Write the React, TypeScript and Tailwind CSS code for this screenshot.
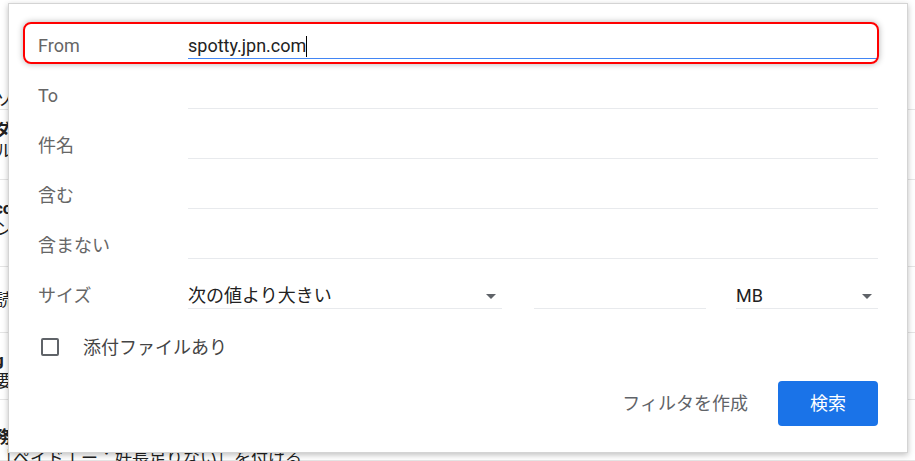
import React from "react";

const jp = { fontFamily: 'Roboto, "Noto Sans CJK JP", sans-serif' };

function Arrow() {
  return (
    <svg width="10" height="5" viewBox="0 0 10 5" className="shrink-0">
      <path d="M0 0 L10 0 L5 5 Z" fill="#5f6368" />
    </svg>
  );
}

function Row({ label, children }: { label: string; children?: React.ReactNode }) {
  return (
    <div className="flex h-[50px] items-end">
      <div className="w-[150px] h-[25px] leading-[24px] text-[18px] text-[#666] whitespace-nowrap">{label}</div>
      {children ?? <div className="flex-1 h-[25px] border-b border-[#e8eaed]" />}
    </div>
  );
}

export default function App() {
  const bgRows = [
    { cls: "h-[110px] pt-[89px]", a: "", b: "ソ" },
    { cls: "h-[70px] pt-[10px]", a: "ダ", b: "ル" },
    { cls: "h-[87px] pt-[18px]", a: "co", b: "ン" },
    { cls: "h-[66px] pt-[23px]", a: "", b: "読" },
    { cls: "h-[67px] pt-[17px]", a: "g", b: "要" },
    { cls: "h-[61px] pt-[27px]", a: "務", b: "［ペイド工ー：妊長足りない］を付ける" },
  ];
  return (
    <div className="relative w-[915px] h-[461px] overflow-hidden bg-white" style={jp}>
      {/* background mail list */}
      <div className="flex flex-col w-full">
        {bgRows.map((r, i) => (
          <div key={i} className={"flex flex-col border-b border-[#e5e5e5] text-[17px] text-[#222] leading-[21px] " + r.cls}>
            {r.a && <div className="ml-[-6px] font-bold">{r.a}</div>}
            <div className="ml-[-4px] whitespace-nowrap">{r.b}</div>
          </div>
        ))}
      </div>

      {/* dialog */}
      <div className="absolute left-[8px] top-[3px] w-[900px] h-[450px] bg-white border border-[#d4d4d4] shadow-[0_2px_6px_rgba(0,0,0,0.25)] pt-[5px] px-[29px]">
        <div className="flex h-[50px] items-end">
          <div className="w-[150px] h-[25px] leading-[24px] text-[18px] text-[#666]">From</div>
          <div className="flex-1 h-[25px] border-b border-[#4285f4] leading-[24px] text-[18px] text-[#222] flex items-center">
            <span>spotty.jpn.com</span>
            <span className="inline-block w-[1px] h-[21px] bg-black" />
          </div>
        </div>
        <Row label="To" />
        <Row label="件名" />
        <Row label="含む" />
        <Row label="含まない" />
        <Row label="サイズ">
          <div className="flex flex-1 items-end">
            <div className="w-[314px] h-[25px] border-b border-[#e8eaed] flex items-center justify-between pr-[6px] text-[18px] text-[#222] leading-[24px]">
              <span>次の値より大きい</span>
              <Arrow />
            </div>
            <div className="ml-[32px] w-[172px] h-[25px] border-b border-[#e8eaed]" />
            <div className="ml-[30px] flex-1 h-[25px] border-b border-[#e8eaed] flex items-center justify-between pr-[6px] text-[18px] text-[#222] leading-[24px]">
              <span>MB</span>
              <Arrow />
            </div>
          </div>
        </Row>
        <div className="flex items-center h-[24px] mt-[26px] pl-[3px]">
          <div className="w-[18px] h-[18px] border-2 border-[#5f6368] rounded-[2px]" />
          <span className="ml-[24px] text-[18px] text-[#444]">添付ファイルあり</span>
        </div>
        <div className="flex justify-end items-center mt-[22px]">
          <span className="text-[18px] text-[#5f6368]">フィルタを作成</span>
          <button className="ml-[30px] w-[100px] h-[45px] rounded-[4px] bg-[#1a73e8] text-white text-[18px]">検索</button>
        </div>
      </div>

      {/* red annotation box */}
      <div className="absolute left-[23px] top-[22px] w-[856px] h-[42px] rounded-[8px] border-2 border-[#ff0000] shadow-[0_0_6px_rgba(0,0,0,0.3)] pointer-events-none" />
    </div>
  );
}
